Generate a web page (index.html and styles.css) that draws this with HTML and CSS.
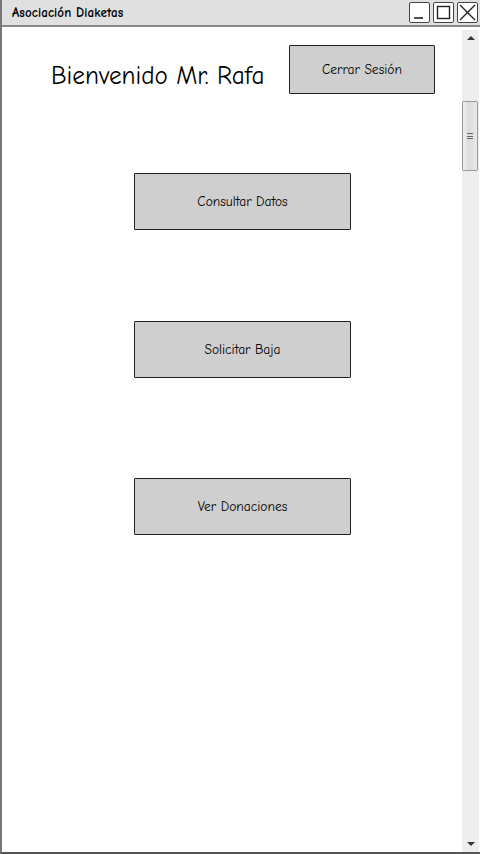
FILE: index.html
```html
<!DOCTYPE html>
<html lang="es">
<head>
<meta charset="utf-8">
<title>Asociación Diaketas</title>
<link rel="stylesheet" href="styles.css">
</head>
<body>
<div class="window">
  <div class="titlebar">
    <span class="title">Asociación Diaketas</span>
    <div class="controls">
      <span class="ctl"><svg width="21" height="21" viewBox="0 0 21 21"><line x1="5" y1="16" x2="14" y2="16" stroke="#222" stroke-width="1.6"/></svg></span>
      <span class="ctl"><svg width="21" height="21" viewBox="0 0 21 21"><rect x="4.5" y="4.5" width="12" height="12" fill="none" stroke="#222" stroke-width="1.4"/></svg></span>
      <span class="ctl"><svg width="21" height="21" viewBox="0 0 21 21"><path d="M3 3 L18 18 M18 3 L3 18" stroke="#222" stroke-width="1.4"/></svg></span>
    </div>
  </div>
  <div class="main">
    <div class="content">
      <div class="header">
        <h1 class="welcome">Bienvenido Mr. Rafa</h1>
        <button class="btn btn-logout">Cerrar Sesión</button>
      </div>
      <div class="actions">
        <button class="btn btn-action a1">Consultar Datos</button>
        <button class="btn btn-action a2">Solicitar Baja</button>
        <button class="btn btn-action a3">Ver Donaciones</button>
      </div>
    </div>
    <div class="scrollbar">
      <div class="arrow up"></div>
      <div class="track">
        <div class="thumb"><span class="grip"></span></div>
      </div>
      <div class="arrow down"></div>
    </div>
  </div>
</div>
</body>
</html>
```

FILE: styles.css
```css
* { box-sizing: border-box; }
html, body { margin: 0; padding: 0; }
body {
  width: 480px;
  height: 854px;
  overflow: hidden;
  background: #fff;
  font-family: "Comic Sans MS", "Comic Neue", "DejaVu Sans", sans-serif;
  color: #000;
}
.window {
  width: 480px;
  height: 854px;
  display: flex;
  flex-direction: column;
  border-left: 2px solid #777;
  border-bottom: 2px solid #555;
}
.titlebar {
  height: 27px;
  flex: none;
  background: #e0e0e0;
  border-bottom: 2px solid #888;
  display: flex;
  align-items: center;
  justify-content: space-between;
  padding-left: 10px;
  padding-right: 2px;
}
.title {
  font-size: 13px;
  font-weight: bold;
  letter-spacing: 0.1px;
}
.controls {
  display: flex;
  gap: 3px;
}
.ctl {
  width: 21px;
  height: 21px;
  border: 1px solid #444;
  border-radius: 2px;
  background: #fff;
  display: flex;
}
.ctl svg { display: block; margin: -1px; }
.main {
  flex: 1;
  display: flex;
  min-height: 0;
}
.content {
  flex: 1;
  display: flex;
  flex-direction: column;
}
.header {
  display: flex;
  align-items: flex-start;
  padding-top: 18px;
  padding-left: 49px;
}
.welcome {
  margin: 16px 0 0 0;
  font-size: 25.2px;
  font-weight: normal;
  width: 238px;
  white-space: nowrap;
}
.btn {
  font-family: inherit;
  background: #cfcfcf;
  border: 1.5px solid #222;
  border-radius: 1px;
  color: #000;
  padding: 0;
  font-size: 13.5px;
}
.btn-logout {
  width: 146px;
  height: 49px;
}
.actions {
  display: flex;
  flex-direction: column;
  padding-left: 132px;
}
.btn-action {
  width: 217px;
  height: 57px;
}
.a1 { margin-top: 79px; }
.a2 { margin-top: 91px; }
.a3 { margin-top: 100px; }
.scrollbar {
  width: 17px;
  flex: none;
  background: #eeeeee;
  margin: 3px 1px 0 0;
  display: flex;
  flex-direction: column;
  align-items: center;
}
.arrow {
  width: 0;
  height: 0;
  border-left: 4px solid transparent;
  border-right: 4px solid transparent;
}
.arrow.up { border-bottom: 4px solid #333; margin-top: 6px; }
.arrow.down { border-top: 4px solid #333; margin-bottom: 6px; }
.track {
  flex: 1;
  width: 100%;
  padding-top: 61px;
}
.thumb {
  width: 16px;
  height: 70px;
  border: 1px solid #999;
  border-radius: 2px;
  background: linear-gradient(to right, #eee, #dcdcdc 40%, #e8e8e8);
  display: flex;
  align-items: center;
  justify-content: center;
}
.grip {
  width: 6px;
  height: 6px;
  border-top: 1px solid #666;
  border-bottom: 1px solid #666;
  position: relative;
}
.grip::after {
  content: "";
  position: absolute;
  left: 0;
  right: 0;
  top: 2px;
  border-top: 1px solid #666;
}
```
